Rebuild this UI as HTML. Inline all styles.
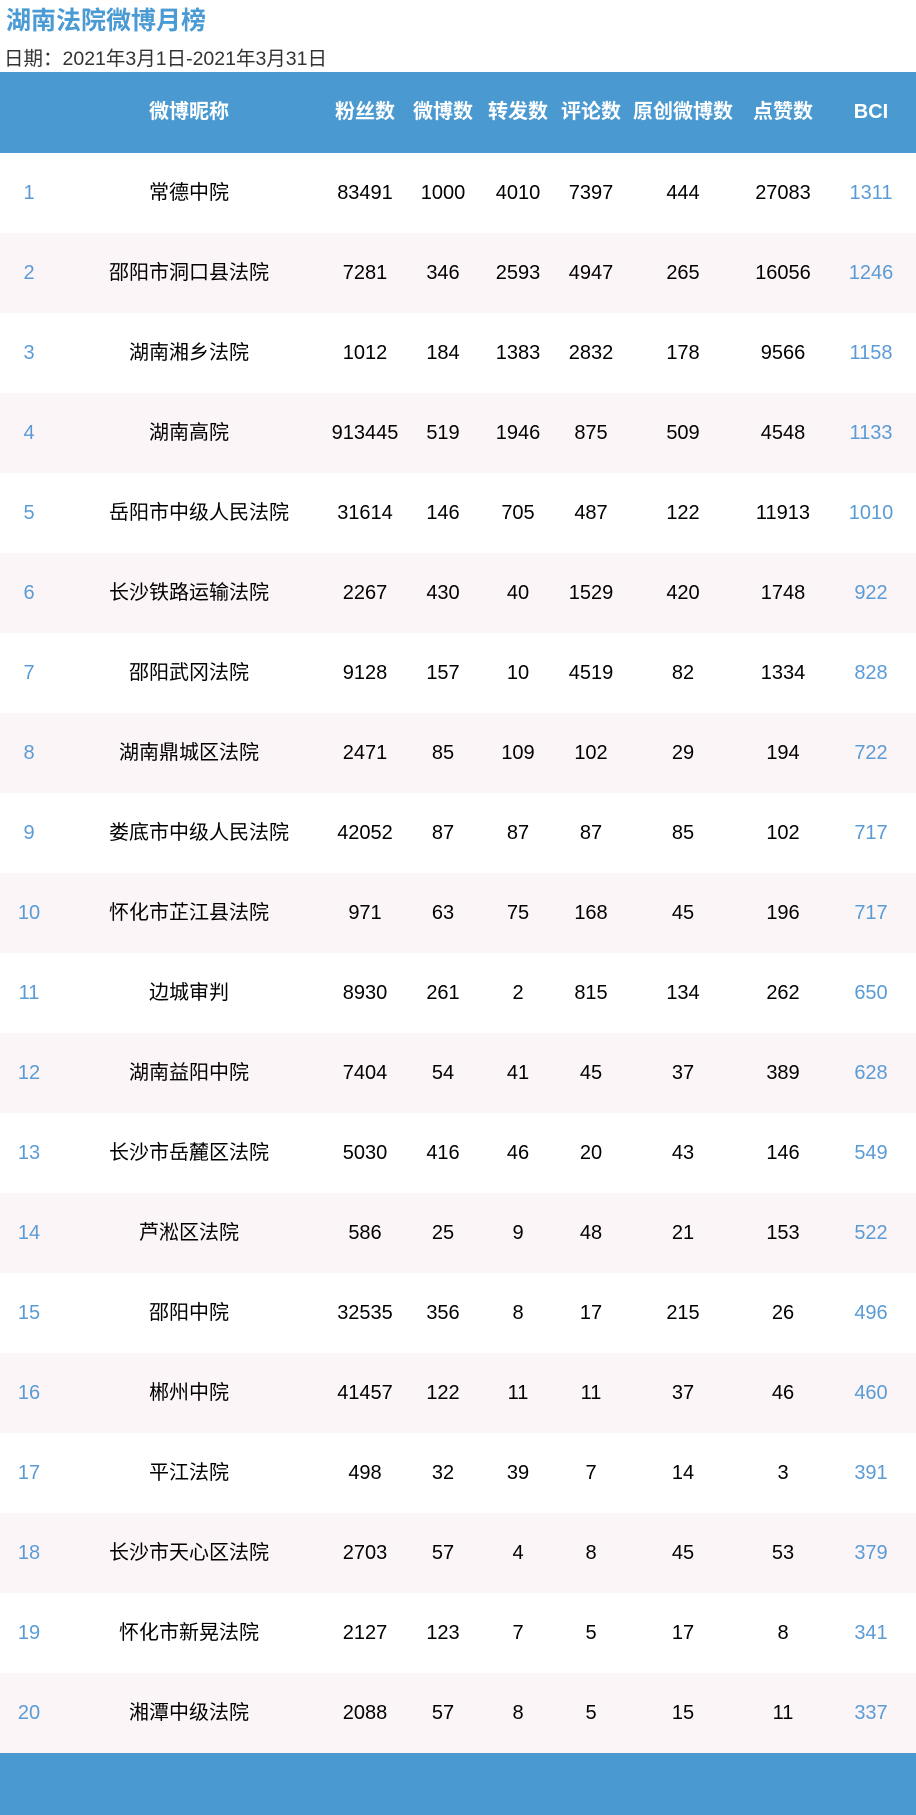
<!DOCTYPE html>
<html><head><meta charset="utf-8"><style>
body{margin:0;width:916px;height:1815px;background:#fff;font-family:"Liberation Sans","Noto Sans CJK SC",sans-serif;position:relative;overflow:hidden}
h1{position:absolute;left:6px;top:5px;margin:0;font-size:25px;font-weight:bold;color:#4a9ad4;line-height:32px}
.date{position:absolute;left:4px;top:46px;font-size:19.5px;color:#333;line-height:26px}
.hdr{position:absolute;left:0;top:72px;width:916px;height:81px;background:#4a9ad1}
.row{position:absolute;left:0;width:916px;height:80px}
.row.alt{background:#fbf5f7}
.c{position:absolute;top:0;width:160px;margin-left:-80px;text-align:center;font-size:20px;line-height:80px;color:#000;white-space:nowrap}
.hdr .c{color:#fff;font-weight:bold;line-height:81px}
.b{color:#5b9bd5}
.foot{position:absolute;left:0;top:1753px;width:916px;height:62px;background:#4a9ad1}
</style></head><body>
<h1>湖南法院微博月榜</h1>
<div class="date">日期：2021年3月1日-2021年3月31日</div>
<div class="hdr">
<div class="c" style="left:189px">微博昵称</div><div class="c" style="left:365px">粉丝数</div><div class="c" style="left:443px">微博数</div><div class="c" style="left:518px">转发数</div><div class="c" style="left:591px">评论数</div><div class="c" style="left:683px">原创微博数</div><div class="c" style="left:783px">点赞数</div><div class="c" style="left:871px">BCI</div>
</div>
<div id="rows"></div>
<div class="foot"></div>
<script>
var d=[["常德中院",83491,1000,4010,7397,444,27083,1311],["邵阳市洞口县法院",7281,346,2593,4947,265,16056,1246],["湖南湘乡法院",1012,184,1383,2832,178,9566,1158],["湖南高院",913445,519,1946,875,509,4548,1133],["岳阳市中级人民法院",31614,146,705,487,122,11913,1010],["长沙铁路运输法院",2267,430,40,1529,420,1748,922],["邵阳武冈法院",9128,157,10,4519,82,1334,828],["湖南鼎城区法院",2471,85,109,102,29,194,722],["娄底市中级人民法院",42052,87,87,87,85,102,717],["怀化市芷江县法院",971,63,75,168,45,196,717],["边城审判",8930,261,2,815,134,262,650],["湖南益阳中院",7404,54,41,45,37,389,628],["长沙市岳麓区法院",5030,416,46,20,43,146,549],["芦淞区法院",586,25,9,48,21,153,522],["邵阳中院",32535,356,8,17,215,26,496],["郴州中院",41457,122,11,11,37,46,460],["平江法院",498,32,39,7,14,3,391],["长沙市天心区法院",2703,57,4,8,45,53,379],["怀化市新晃法院",2127,123,7,5,17,8,341],["湘潭中级法院",2088,57,8,5,15,11,337]];
var xs=[189,365,443,518,591,683,783,871],h="";
d.forEach(function(r,i){h+='<div class="row'+(i%2?' alt':'')+'" style="top:'+(153+i*80)+'px"><div class="c b" style="left:29px">'+(i+1)+'</div>';
r.forEach(function(v,j){h+='<div class="c'+(j==7?' b':'')+'" style="left:'+xs[j]+'px">'+v+'</div>'});h+='</div>'});
document.getElementById('rows').innerHTML=h;
</script>
</body></html>
